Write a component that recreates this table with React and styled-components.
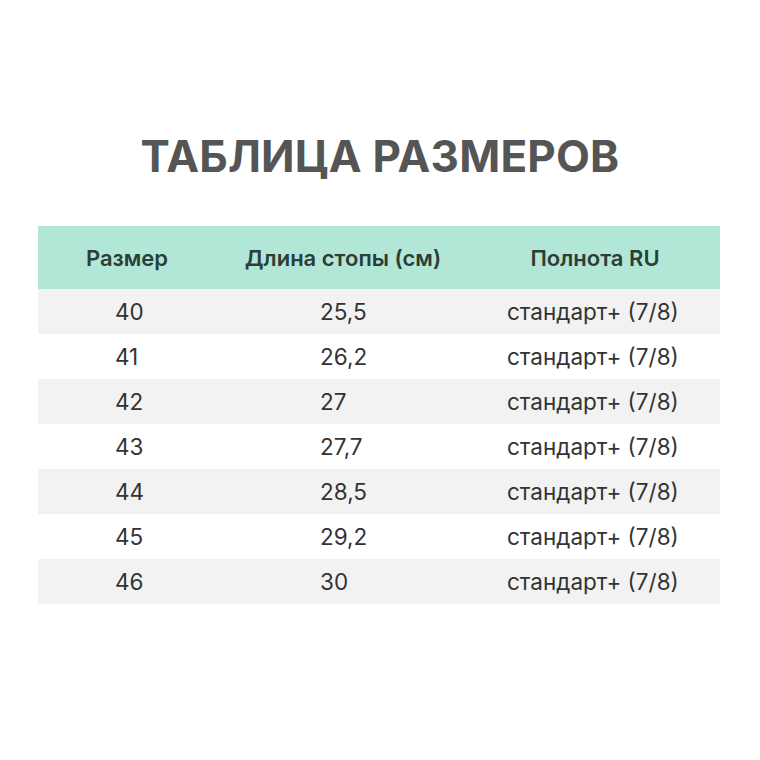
import React from "react";
import styled, { createGlobalStyle } from "styled-components";

const Global = createGlobalStyle`
  html, body { margin: 0; padding: 0; background: #ffffff; }
  body { font-family: Inter, "Noto Sans", "Liberation Sans", sans-serif; }
`;

const Page = styled.div`
  width: 760px;
  height: 760px;
  box-sizing: border-box;
  padding-top: 128px;
  display: flex;
  flex-direction: column;
  align-items: center;
`;

const Title = styled.h1`
  margin: 0;
  font-size: 44px;
  font-weight: 700;
  color: #555555;
  letter-spacing: 0.2px;
  line-height: 56px;
`;

const Table = styled.div`
  margin-top: 42px;
  width: 682px;
  margin-left: -2px;
  display: grid;
  grid-template-columns: 178px 254px 250px;
`;

const HeadCell = styled.div`
  background: #b2e6d7;
  height: 63px;
  display: flex;
  align-items: center;
  justify-content: center;
  font-size: 22px;
  font-weight: 600;
  color: #2c3e38;
`;

const Cell = styled.div`
  height: 45px;
  display: flex;
  align-items: center;
  box-sizing: border-box;
  padding-left: ${(p) => p.$pad}px;
  background: ${(p) => (p.$odd ? "#f2f2f2" : "#ffffff")};
  font-size: 22.5px;
  font-weight: 400;
  color: #333333;
`;

const heads = ["Размер", "Длина стопы (см)", "Полнота RU"];
const pads = [77, 104, 37];
const rows = [
  ["40", "25,5"],
  ["41", "26,2"],
  ["42", "27"],
  ["43", "27,7"],
  ["44", "28,5"],
  ["45", "29,2"],
  ["46", "30"],
];

export default function App() {
  return (
    <>
      <Global />
      <Page>
        <Title>ТАБЛИЦА РАЗМЕРОВ</Title>
        <Table>
          {heads.map((h) => (
            <HeadCell key={h}>{h}</HeadCell>
          ))}
          {rows.map((r, i) =>
            [r[0], r[1], "стандарт+ (7/8)"].map((v, j) => (
              <Cell key={i + "-" + j} $pad={pads[j]} $odd={i % 2 === 0}>
                {v}
              </Cell>
            ))
          )}
        </Table>
      </Page>
    </>
  );
}
